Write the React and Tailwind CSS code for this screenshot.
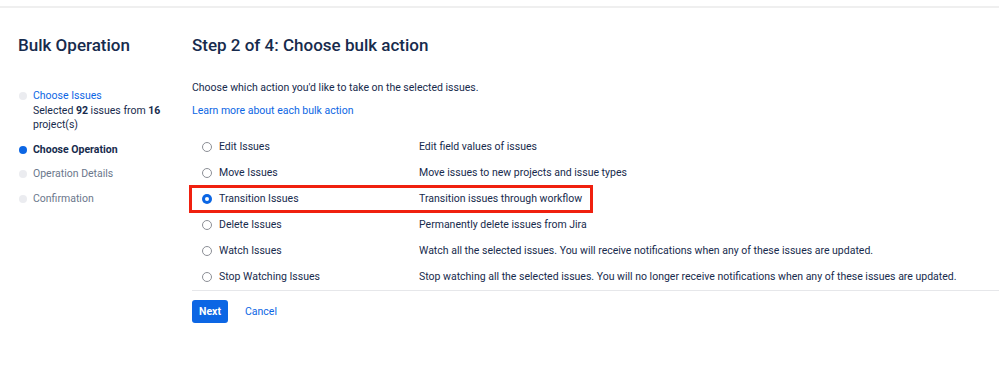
import React from "react";

const ops = [
  ["Edit Issues", "Edit field values of issues"],
  ["Move Issues", "Move issues to new projects and issue types"],
  ["Transition Issues", "Transition issues through workflow"],
  ["Delete Issues", "Permanently delete issues from Jira"],
  ["Watch Issues", "Watch all the selected issues. You will receive notifications when any of these issues are updated."],
  ["Stop Watching Issues", "Stop watching all the selected issues. You will no longer receive notifications when any of these issues are updated."],
];

function Radio({ checked }) {
  return checked ? (
    <span className="w-[10px] h-[10px] rounded-full bg-[#0b66e4] flex items-center justify-center shrink-0">
      <span className="w-[4px] h-[4px] rounded-full bg-white" />
    </span>
  ) : (
    <span className="w-[10px] h-[10px] rounded-full border border-[#8c8f96] bg-white shrink-0" />
  );
}

export default function App() {
  return (
    <div className="w-[999px] h-[374px] bg-white text-[#172b4d] font-['Roboto',sans-serif] overflow-hidden">
      <div className="h-[6px]" />
      <div className="h-[2px] bg-[#efefef]" />
      <div className="flex">
        <div className="w-[192px] shrink-0 pl-[18px] pt-[25px]">
          <h1 className="text-[17px] leading-[24px] font-medium">Bulk Operation</h1>
          <ul className="mt-[32px] text-[10.5px] leading-[14.5px]">
            <li className="flex">
              <span className="w-[8px] h-[8px] rounded-full bg-[#ebecf0] mt-[3px] ml-[1px] mr-[6px] shrink-0" />
              <div>
                <div className="text-[#0c66e4]">Choose Issues</div>
                <div>Selected <b>92</b> issues from <b>16</b></div>
                <div>project(s)</div>
              </div>
            </li>
            <li className="flex mt-[10px]">
              <span className="w-[8px] h-[8px] rounded-full bg-[#0c66e4] mt-[3px] ml-[1px] mr-[6px] shrink-0" />
              <div className="font-bold">Choose Operation</div>
            </li>
            <li className="flex mt-[10px]">
              <span className="w-[8px] h-[8px] rounded-full bg-[#ebecf0] mt-[3px] ml-[1px] mr-[6px] shrink-0" />
              <div className="text-[#6b778c]">Operation Details</div>
            </li>
            <li className="flex mt-[10px]">
              <span className="w-[8px] h-[8px] rounded-full bg-[#ebecf0] mt-[3px] ml-[1px] mr-[6px] shrink-0" />
              <div className="text-[#6b778c]">Confirmation</div>
            </li>
          </ul>
        </div>
        <div className="flex-1 pt-[25px]">
          <h2 className="text-[17px] leading-[24px] font-medium">Step 2 of 4: Choose bulk action</h2>
          <p className="mt-[24px] text-[10.5px] leading-[14px]">Choose which action you'd like to take on the selected issues.</p>
          <a className="block mt-[9px] text-[10.5px] leading-[14px] text-[#0c66e4]">Learn more about each bulk action</a>
          <div className="mt-[16px] text-[10.5px] leading-[14px]">
            {ops.map(([name, desc], i) =>
              i === 2 ? (
                <div key={name} className="h-[27px] relative z-10">
                  <div className="flex items-center h-[28px] w-[404px] -ml-[3px] -mt-[1px] border-[3px] border-[#f0200f]">
                    <div className="w-[227px] flex items-center pl-[10px] shrink-0">
                      <Radio checked />
                      <span className="ml-[7px]">{name}</span>
                    </div>
                    <span>{desc}</span>
                  </div>
                </div>
              ) : (
                <div key={name} className="flex items-center h-[26px]">
                  <div className="w-[227px] flex items-center pl-[10px] shrink-0">
                    <Radio />
                    <span className="ml-[7px]">{name}</span>
                  </div>
                  <span>{desc}</span>
                </div>
              )
            )}
          </div>
          <div className="h-[1px] bg-[#e6e7ea]" />
          <div className="flex items-center mt-[9px]">
            <button className="h-[23px] w-[36px] rounded-[3px] bg-[#0c66e4] text-white text-[10.5px] font-bold">Next</button>
            <button className="ml-[10px] h-[23px] px-[7px] text-[#0c66e4] text-[10.5px]">Cancel</button>
          </div>
        </div>
      </div>
    </div>
  );
}
